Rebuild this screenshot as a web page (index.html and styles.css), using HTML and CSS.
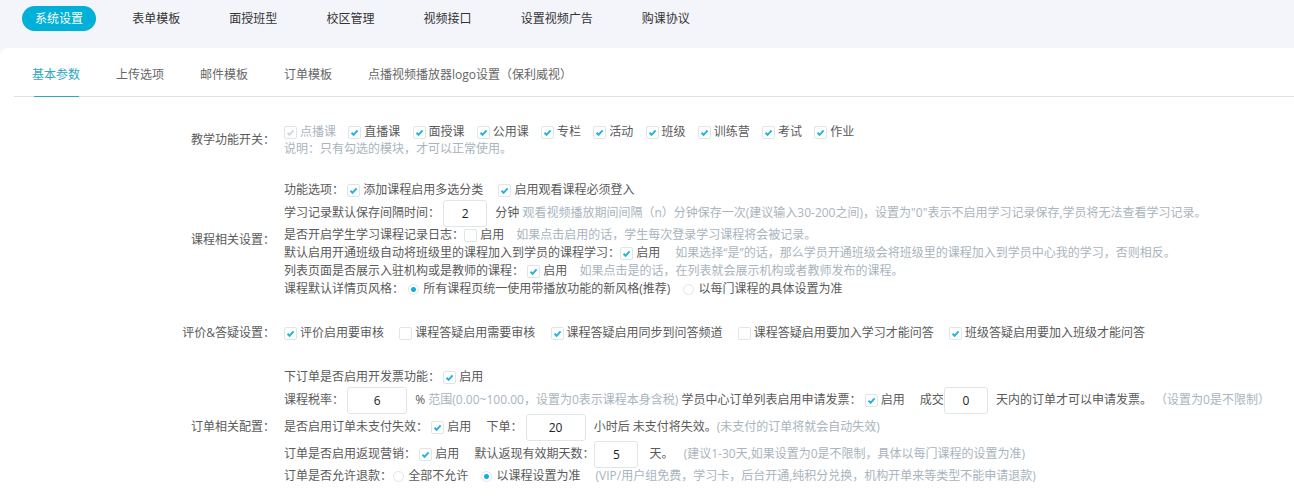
FILE: index.html
```html
<!DOCTYPE html>
<html lang="zh-CN">
<head>
  <meta charset="utf-8">
  <title>系统设置</title>
  <link rel="stylesheet" href="styles.css">
</head>
<body>

  <nav class="top-nav">
    <a class="active" href="#">系统设置</a>
    <a href="#">表单模板</a>
    <a href="#">面授班型</a>
    <a href="#">校区管理</a>
    <a href="#">视频接口</a>
    <a href="#">设置视频广告</a>
    <a href="#">购课协议</a>
  </nav>

  <main class="panel">
    <nav class="tabs">
      <a class="active" href="#">基本参数</a>
      <a href="#">上传选项</a>
      <a href="#">邮件模板</a>
      <a href="#">订单模板</a>
      <a href="#">点播视频播放器logo设置（保利威视）</a>
    </nav>

    <form class="settings">
      <section class="group">
        <h2 class="group-name">教学功能开关：</h2>
        <div class="group-body">
          <div class="line modules">
            <label class="disabled"><input type="checkbox" checked disabled> 点播课</label>
            <label><input type="checkbox" checked> 直播课</label>
            <label><input type="checkbox" checked> 面授课</label>
            <label><input type="checkbox" checked> 公用课</label>
            <label><input type="checkbox" checked> 专栏</label>
            <label><input type="checkbox" checked> 活动</label>
            <label><input type="checkbox" checked> 班级</label>
            <label><input type="checkbox" checked> 训练营</label>
            <label><input type="checkbox" checked> 考试</label>
            <label><input type="checkbox" checked> 作业</label>
          </div>
          <div class="line note"><span class="tip">说明：只有勾选的模块，才可以正常使用。</span></div>
        </div>
      </section>

      <section class="group">
        <h2 class="group-name">课程相关设置：</h2>
        <div class="group-body">
          <div class="line">功能选项：
            <label><input type="checkbox" checked> 添加课程启用多选分类</label>
            <label><input type="checkbox" checked> 启用观看课程必须登入</label>
          </div>
          <div class="line tall">
            <label for="interval">学习记录默认保存间隔时间：</label>
            <input class="num" type="text" id="interval" value="2"> 分钟
            <span class="tip">观看视频播放期间间隔（n）分钟保存一次(建议输入30-200之间)，设置为"0"表示不启用学习记录保存,学员将无法查看学习记录。</span>
          </div>
          <div class="line">是否开启学生学习课程记录日志：<label class="near"><input type="checkbox"> 启用</label>
            <span class="tip">如果点击启用的话，学生每次登录学习课程将会被记录。</span>
          </div>
          <div class="line">默认启用开通班级自动将班级里的课程加入到学员的课程学习：<label><input type="checkbox" checked> 启用</label>
            <span class="tip">如果选择“是”的话，那么学员开通班级会将班级里的课程加入到学员中心我的学习，否则相反。</span>
          </div>
          <div class="line">列表页面是否展示入驻机构或是教师的课程：
            <label class="near"><input type="checkbox" checked> 启用</label>
            <span class="tip">如果点击是的话，在列表就会展示机构或者教师发布的课程。</span>
          </div>
          <div class="line">课程默认详情页风格：
            <label class="near"><input type="radio" name="style" checked> 所有课程页统一使用带播放功能的新风格(推荐)</label>
            <label><input type="radio" name="style"> 以每门课程的具体设置为准</label>
          </div>
        </div>
      </section>

      <section class="group">
        <h2 class="group-name">评价&amp;答疑设置：</h2>
        <div class="group-body">
          <div class="line">
            <label><input type="checkbox" checked> 评价启用要审核</label>
            <label><input type="checkbox"> 课程答疑启用需要审核</label>
            <label><input type="checkbox" checked> 课程答疑启用同步到问答频道</label>
            <label><input type="checkbox"> 课程答疑启用要加入学习才能问答</label>
            <label><input type="checkbox" checked> 班级答疑启用要加入班级才能问答</label>
          </div>
        </div>
      </section>

      <section class="group">
        <h2 class="group-name">订单相关配置：</h2>
        <div class="group-body">
          <div class="line">下订单是否启用开发票功能：
            <label><input type="checkbox" checked> 启用</label>
          </div>
          <div class="line tall">
            <label for="tax">课程税率：</label>
            <input class="num wide" type="text" id="tax" value="6"> %
            <span class="tip">范围(0.00~100.00，设置为0表示课程本身含税)</span>
            学员中心订单列表启用申请发票：
            <label><input type="checkbox" checked> 启用</label>
            <label for="deal">成交</label><input class="num" type="text" id="deal" value="0"> 天内的订单才可以申请发票。
            <span class="tip">（设置为0是不限制）</span>
          </div>
          <div class="line tall">是否启用订单未支付失效：
            <label><input type="checkbox" checked> 启用</label>
            <label for="hours">下单：</label>
            <input class="num wide" type="text" id="hours" value="20"> 小时后 未支付将失效。<span class="tip">(未支付的订单将就会自动失效)</span>
          </div>
          <div class="line tall">订单是否启用返现营销：
            <label><input type="checkbox" checked> 启用</label>
            <label for="days">默认返现有效期天数：</label><input class="num" type="text" id="days" value="5"> <span class="unit">天。</span>
            <span class="tip">(建议1-30天,如果设置为0是不限制，具体以每门课程的设置为准)</span>
          </div>
          <div class="line">订单是否允许退款：<label class="near"><input type="radio" name="refund"> 全部不允许</label>
            <label><input type="radio" name="refund" checked> 以课程设置为准</label>
            <span class="tip">(VIP/用户组免费，学习卡，后台开通,纯积分兑换，机构开单来等类型不能申请退款)</span>
          </div>
        </div>
      </section>
    </form>
  </main>

</body>
</html>
```
FILE: styles.css
```css
* {
  box-sizing: border-box;
}

body {
  margin: 0;
  min-height: 100vh;
  display: flex;
  flex-direction: column;
  background: #f4f5fa;
  color: #5a5a5a;
  font-family: "Open Sans", "Noto Sans CJK SC", sans-serif;
  font-size: 12px;
  line-height: 18px;
  overflow-x: hidden;
}

a {
  text-decoration: none;
}

/* Top navigation */
.top-nav {
  padding: 6px 22px 17px;
  white-space: nowrap;
}

.top-nav a {
  display: inline-block;
  margin-right: 20px;
  padding: 0 13px;
  border-radius: 13px;
  color: #333;
  line-height: 25px;
}

.top-nav a.active {
  background: #00b0d8;
  color: #fff;
}

/* White panel with the sub tabs */
.panel {
  flex: 1;
  padding-left: 14px;
  border-top-left-radius: 8px;
  background: #fff;
}

.tabs {
  display: flex;
  gap: 36px;
  padding: 0 18px;
  border-bottom: 1px solid #dae3e6;
}

.tabs a {
  position: relative;
  padding: 6px 0 0;
  color: #666;
  line-height: 42px;
}

.tabs a.active {
  color: #2fa8c0;
}

.tabs a.active::after {
  content: "";
  position: absolute;
  left: 2px;
  right: 1px;
  bottom: -1px;
  height: 1px;
  background: #2fa8c0;
}

/* Settings */
.settings {
  padding-top: 26px;
}

.group {
  display: flex;
  align-items: center;
  margin-bottom: 26px;
}

.group:first-child {
  margin-bottom: 24px;
}

.group:last-child {
  margin-bottom: 0;
}

.group-name {
  flex: none;
  width: 261px;
  margin: 0 9px 0 0;
  font-size: 12px;
  font-weight: normal;
  text-align: right;
}

.line {
  height: 18px;
  white-space: nowrap;
}

.line.tall {
  height: 27px;
  line-height: 27px;
}

.line.note {
  height: 16px;
  line-height: 16px;
}

.line label:not([for]) {
  margin-right: 12px;
}

.modules label:not([for]),
.line label.near {
  margin-right: 9px;
}

.disabled,
.tip {
  color: #a9b4be;
}

.unit {
  margin: 0 7px 0 3px;
}

/* Form controls */
input[type="checkbox"],
input[type="radio"] {
  appearance: none;
  width: 13px;
  height: 13px;
  margin: 0;
  border: 1px solid #dfe6e8;
  border-radius: 2px;
  background: #fff center / 11px 11px no-repeat;
  vertical-align: middle;
}

input[type="checkbox"]:checked {
  background-image: url("data:image/svg+xml,%3Csvg xmlns='http://www.w3.org/2000/svg' viewBox='0 0 11 11'%3E%3Cpath d='M2.5 5.7L4.6 7.8L8.6 3.4' fill='none' stroke='%2325b5dc' stroke-width='2'/%3E%3C/svg%3E");
}

input[type="checkbox"]:disabled {
  background-image: url("data:image/svg+xml,%3Csvg xmlns='http://www.w3.org/2000/svg' viewBox='0 0 11 11'%3E%3Cpath d='M2.5 5.7L4.6 7.8L8.6 3.4' fill='none' stroke='%23d3d9dc' stroke-width='2'/%3E%3C/svg%3E");
}

input[type="radio"] {
  width: 11px;
  height: 11px;
  margin: 0 1px;
  border-radius: 50%;
}

input[type="radio"]:checked {
  background-image: radial-gradient(circle, #10aede 2px, transparent 3px);
}

.num {
  width: 44px;
  height: 27px;
  margin: -1px 5px 0 0;
  padding: 0;
  border: 1px solid #dfe6e8;
  border-radius: 3px;
  background: #fff;
  color: #222;
  font: inherit;
  text-align: center;
  vertical-align: middle;
}

.num.wide {
  width: 60px;
}
```
